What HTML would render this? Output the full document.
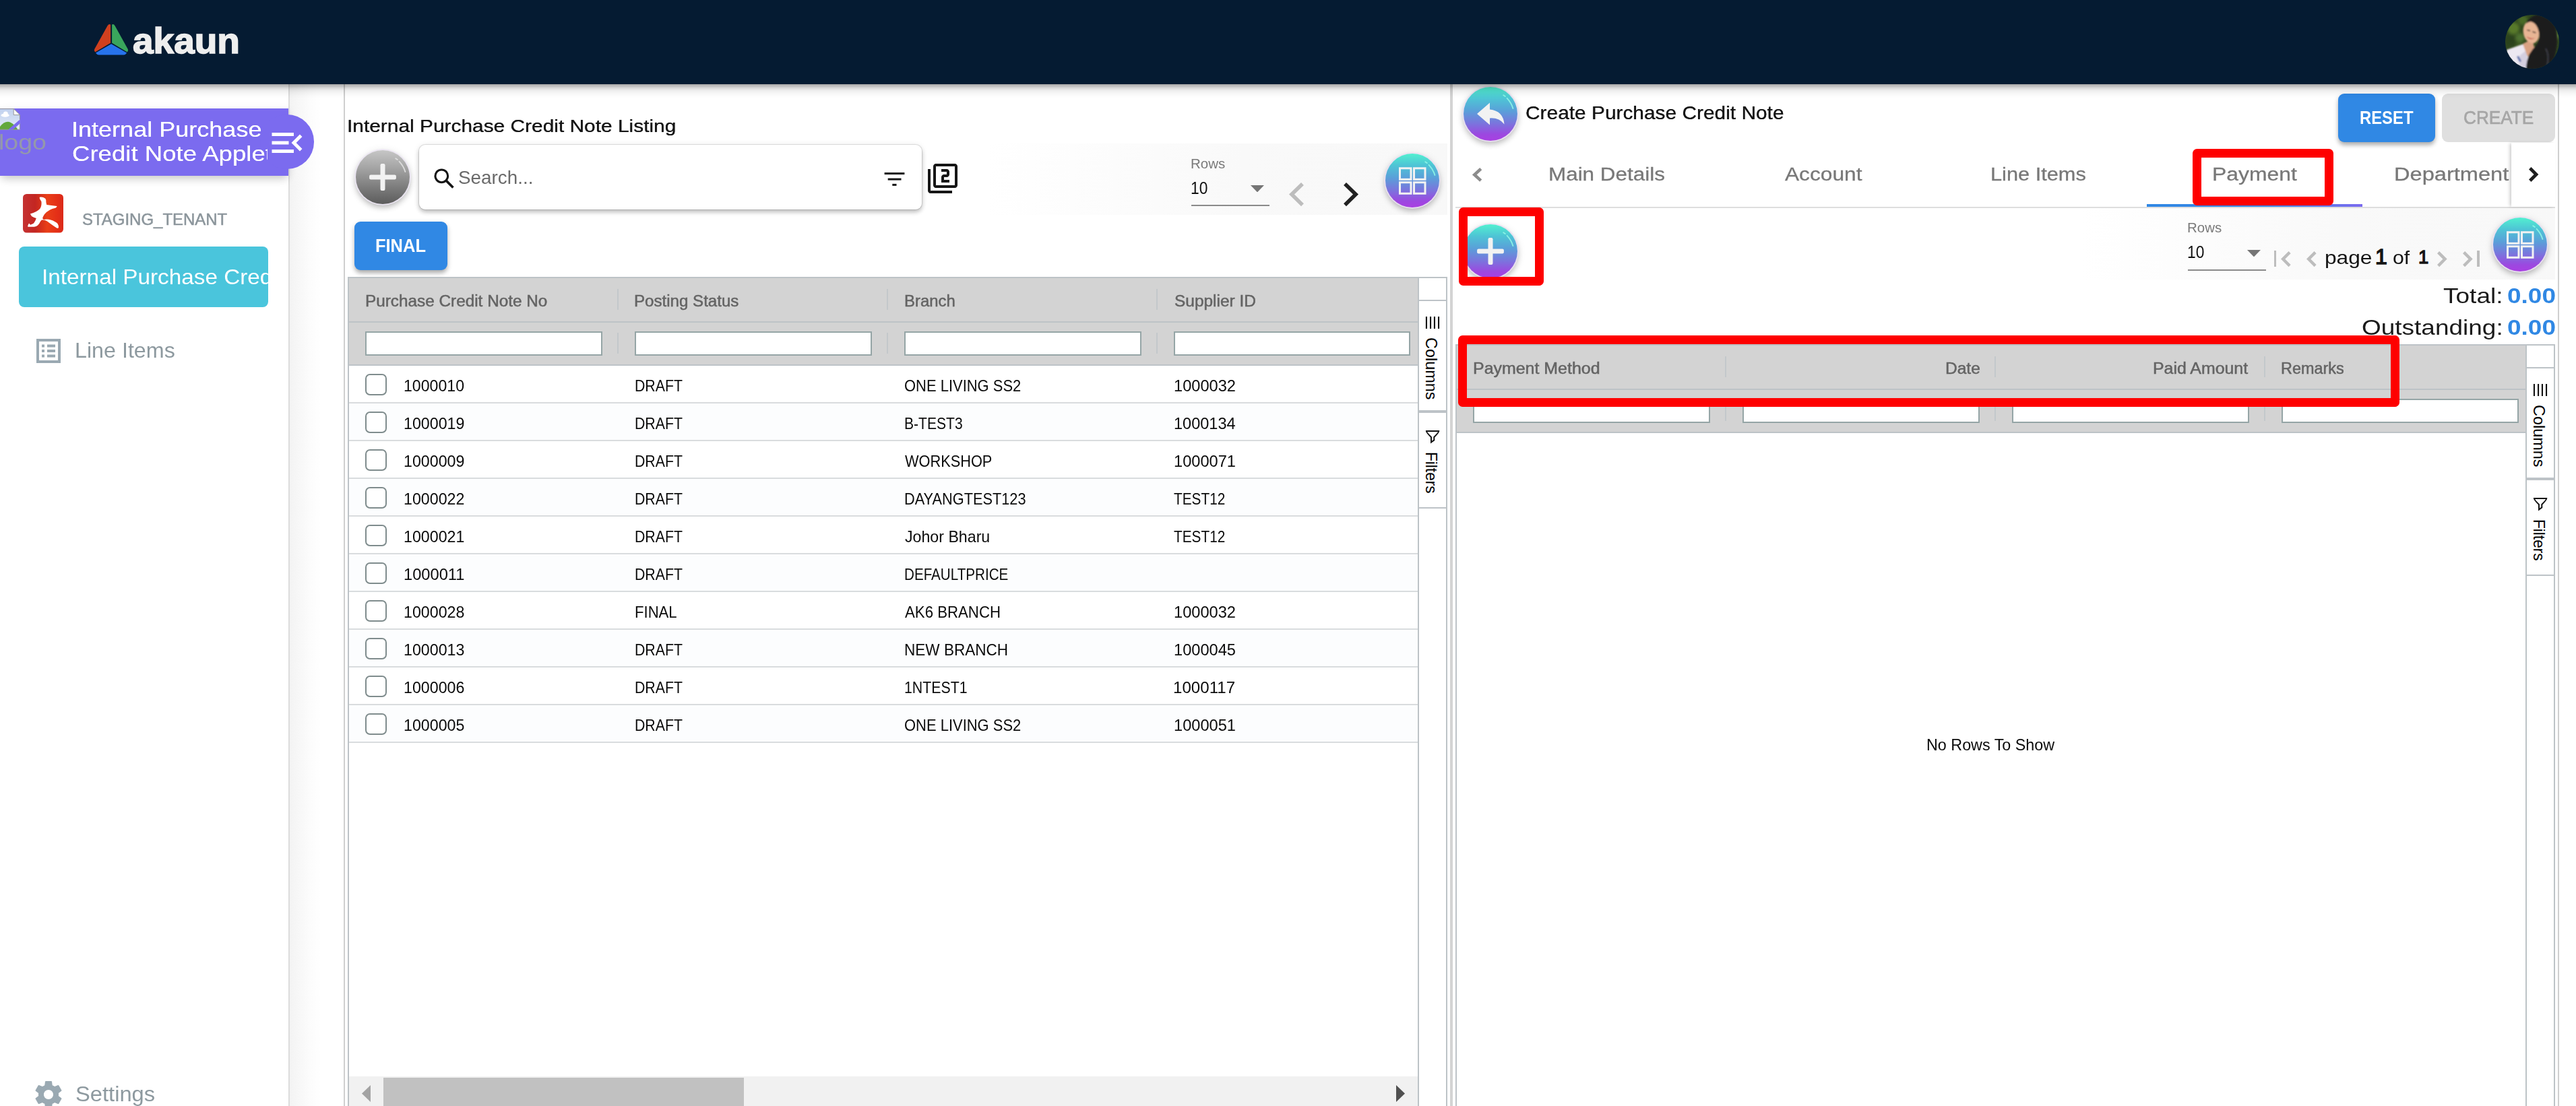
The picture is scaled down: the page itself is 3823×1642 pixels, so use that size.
<!DOCTYPE html>
<html lang="en"><head><meta charset="utf-8"><title>Internal Purchase Credit Note Applet</title>
<style>
*{box-sizing:border-box;margin:0;padding:0}
html,body{width:3823px;height:1642px;overflow:hidden;background:#fff}
body{position:relative;font-family:"Liberation Sans",Arial,sans-serif;color:#000}
.a{position:absolute}
.t{position:absolute;white-space:nowrap;line-height:1;display:block}
#hdr{left:-60px;top:-40px;width:3943px;padding:0;height:165px;background:#051b32;box-shadow:0 3px 6px rgba(0,0,0,.26),0 8px 13px rgba(0,0,0,.12),0 2px 20px rgba(0,0,0,.09);z-index:20}
#side{left:0;top:125px;width:430px;height:1517px;background:#fff;border-right:2px solid #dcdcdc;z-index:3}
#strip{left:430px;top:125px;width:80px;height:1517px;background:linear-gradient(90deg,#f3f3f3 0,#f8f8f8 20%,#fcfcfc 38%,#fff 58%);z-index:1}
#vl1{left:510px;top:125px;width:2px;height:1517px;background:#cfcfcf;z-index:1}
#banner{left:0;top:161px;width:428px;height:100px;background:#7b6bef;box-shadow:0 7px 12px -3px rgba(0,0,0,.17),0 3px 14px rgba(0,0,0,.07);z-index:5}
#pill{left:386px;top:170px;width:80px;height:81px;border-radius:40.5px;background:#7b6bef;z-index:6}
#cyan{left:28px;top:366px;width:370px;height:90px;border-radius:8px;background:#4ac5dc;overflow:hidden;z-index:4}
.circ{border-radius:50%;width:80px;height:80px;background:linear-gradient(180deg,#52f0d0 0%,#4ec4d5 22%,#5a9fd9 45%,#7b74dd 68%,#9c48e0 88%,#a93fe2 100%);box-shadow:0 0 0 1.8px rgba(234,224,242,.95),0 5px 9px rgba(0,0,0,.22),0 2px 14px rgba(0,0,0,.12)}
.circ.gray{background:linear-gradient(180deg,#c6c6c6 0%,#a2a2a2 35%,#7b7b7b 70%,#5c5c5c 100%);box-shadow:0 0 0 1.8px rgba(236,230,243,.95),0 5px 9px rgba(0,0,0,.22),0 2px 14px rgba(0,0,0,.12)}
.btn{border-radius:9px;background:#3088e4;box-shadow:0 5px 6px -1px rgba(0,0,0,.25),0 3px 9px rgba(0,0,0,.14)}
.band{background:linear-gradient(90deg,rgba(248,248,248,0) 0,#f9f9f9 55%,#f8f8f8 100%)}
.grid{border:2px solid #bdc3c7;background:#fff;overflow:hidden}
.gh{left:0;top:0;height:64px;background:#d3d3d3;border-bottom:2px solid #bdc3c7}
.gf{left:0;top:66px;height:64px;background:#d3d3d3;border-bottom:2px solid #bdc3c7}
.sep{width:2px;background:#c3c8cb}
.fi{height:36px;background:#fff;border:2px solid #95a5a6}
.row{left:0;height:56px;border-bottom:2px solid #d9dcde;background:#fff}
.row.odd{background:#fcfdfe}
.cb{width:32px;height:32px;border:2px solid #7f8c8d;border-radius:7px;background:#fff}
.sb{background:#fff;border-left:2px solid #bdc3c7}
.sbl{left:0;width:44px;height:2px;background:#bdc3c7}
.vt{position:absolute;white-space:nowrap;line-height:1;transform-origin:0 0;transform:rotate(90deg);font-size:24px;color:#000}
.red{border:13px solid #fe0000;border-radius:6.5px;z-index:15}
</style></head>
<body>
<div id="hdr" class="a"><div class="a" style="left:60px;top:40px;width:3823px;height:125px">
<svg class="a" style="left:136px;top:32px" width="60" height="54" viewBox="136 32 60 54">
<path d="M164.1 36.6 Q161.6 35 159.4 38.4 L140.5 72.6 Q139 75.8 141.4 77.2 L164.1 63.8 Z" fill="#d0401f"/>
<path d="M166.1 36.6 Q168.6 35 170.7 38.4 L189.5 72.6 Q191 75.8 188.6 77.2 L166.1 63.8 Z" fill="#3aa55c"/>
<path d="M165.1 65.3 L142 78.6 Q143.6 81.3 146.5 81.4 L183.7 81.4 Q186.6 81.3 188.2 78.6 Z" fill="#2773ec"/>
</svg>
<span class="t" style="left:197.14px;top:32.59px;font-size:54px;font-weight:700;color:#eeeeee;transform:scaleX(1.0183);transform-origin:0 0;-webkit-text-stroke:1.6px #eeeeee">akaun</span>
<svg class="a" style="left:3718px;top:22px" width="80" height="80" viewBox="0 0 80 80">
<defs><clipPath id="av"><circle cx="40" cy="40" r="40"/></clipPath><filter id="bl" x="-10%" y="-10%" width="120%" height="120%"><feGaussianBlur stdDeviation="0.9"/></filter><filter id="bl2" x="-20%" y="-20%" width="140%" height="140%"><feGaussianBlur stdDeviation="2.2"/></filter></defs>
<g clip-path="url(#av)">
<rect width="80" height="80" fill="#31481f"/>
<g filter="url(#bl2)"><circle cx="12" cy="20" r="9" fill="#587a2c"/><circle cx="26" cy="8" r="7" fill="#4a6a28"/><circle cx="8" cy="38" r="8" fill="#2a421c"/><circle cx="22" cy="34" r="7" fill="#4f7230"/><circle cx="76" cy="30" r="6" fill="#5d8238"/><circle cx="20" cy="46" r="5" fill="#3d5a22"/></g>
<g filter="url(#bl)">
<path d="M2 52 L26 43.5 L35 52 L33 82 L0 82 Z" fill="#ece8f2"/>
<path d="M22 60 L32 52 L33 82 L20 82 Z" fill="#d4cfe0"/>
<path d="M17 62 l3 -1 l4 8 l-3 1 Z" fill="#5c6fae"/>
<path d="M26 43 L40 36 L44 52 L33 62 Z" fill="#d9a283"/>
<ellipse cx="38.5" cy="26" rx="11.6" ry="16.5" transform="rotate(-12 38.5 26)" fill="#e8b594"/>
<path d="M31 13 Q38 -1 52 0 Q68 2 74.5 18 Q79 34 76 50 Q74 66 64 82 L31 82 Q31 68 36 58 Q41 50 47 44 Q52 36 50 26 Q47 12 38 10 Q34 10.5 31 13 Z" fill="#1a1b1f"/>
<path d="M60 50 Q66 60 62 76" stroke="#3a3b42" stroke-width="2.2" fill="none"/>
<path d="M31.5 32 Q37 39.5 44.5 34 Q38 36.6 31.5 32 Z" fill="#c44a45"/>
<path d="M32.5 22.5 l4.5 1.2 M40.5 25 l4.8 1.8" stroke="#3a2a26" stroke-width="1.6" fill="none"/>
</g>
</g></svg>
</div></div>
<div id="side" class="a"></div><div id="strip" class="a"></div><div id="vl1" class="a"></div>
<div id="pill" class="a"></div>
<div id="banner" class="a">
<svg class="a" style="left:0;top:0" width="30" height="32" viewBox="0 0 30 32">
<defs><linearGradient id="sky" x1="0" x2="0" y1="0" y2="1"><stop offset="0" stop-color="#bfd0ee"/><stop offset="1" stop-color="#e4ecf8"/></linearGradient></defs>
<path d="M0 0.4 H20.2 L29.6 9.6 V31.4 H0 Z" fill="url(#sky)"/>
<ellipse cx="7.6" cy="10.2" rx="6" ry="2.6" fill="#fff"/><circle cx="8.4" cy="8" r="3.4" fill="#fff"/>
<path d="M0 31.4 V27 Q8 17 16 21 Q22 24 26.5 31.4 Z" fill="#62a83c"/>
<path d="M12 31.6 L29.8 16.3 V22.2 L19.2 31.6 Z" fill="#7b6bef"/>
<path d="M20.2 0.4 V9.6 H29.6 Z" fill="#fff"/>
<path d="M0 0.6 H20.2 L29.4 9.6 V16.5 M20.2 0.6 V9.6 H29.4 M29.4 22.5 V31.2 H19.5 M12 31.2 H0" fill="none" stroke="#8e8e8e" stroke-width="0.9"/></svg>
</div>
<div class="a" style="left:0;top:161px;width:396.6px;height:100px;overflow:hidden;z-index:7">
<span class="t" style="left:-2.15px;top:34.56px;font-size:31px;font-weight:400;color:#9498ab;transform:scaleX(1.2109);transform-origin:0 0;">logo</span>
<span class="t" style="left:105.58px;top:16.28px;font-size:31.8px;font-weight:400;color:#fff;transform:scaleX(1.1333);transform-origin:0 0;text-shadow:0 0 .6px #fff">Internal Purchase</span>
<span class="t" style="left:106.68px;top:52.08px;font-size:31.8px;font-weight:400;color:#fff;transform:scaleX(1.1506);transform-origin:0 0;text-shadow:0 0 .6px #fff">Credit Note Applet</span>
</div>
<svg class="a" style="left:396px;top:182px;z-index:8" width="60" height="60" viewBox="0 0 24 24"><path fill="#fff" d="M3 18h13v-2H3v2zm0-5h10v-2H3v2zm0-7v2h13V6H3zm18 9.59L17.42 12 21 8.41 19.59 7l-5 5 5 5L21 15.59z"/></svg>
<svg class="a" style="left:34px;top:288px;z-index:4" width="60" height="57.6" viewBox="0 0 60 57.6">
<defs><linearGradient id="tg" x1="0" x2="1" y1="0" y2="0"><stop offset="0" stop-color="#c53232"/><stop offset=".3" stop-color="#c32622"/><stop offset=".5" stop-color="#dc3519"/><stop offset=".6" stop-color="#e93f18"/><stop offset=".85" stop-color="#e42f17"/><stop offset="1" stop-color="#da2a1a"/></linearGradient></defs>
<rect x="0" y="0" width="60" height="57.6" rx="5.5" fill="url(#tg)"/>
<path d="M24.8 4.8 Q29 3.6 33.3 6.8 Q35 9 34.4 12.3 L35.2 16 Q42 17 50.6 18.1 Q50.5 19.8 48.3 20.8 Q43 22 39.8 23.8 Q35 26.5 32.1 30 Q30 33 29.1 36.1 L30.6 38 Q36 36.8 41.4 38.4 Q48 40.5 51.3 43.8 Q53.5 47 52.9 50 Q52 51.2 50.6 50.7 Q46 48 41.4 44.6 Q38 41.8 35.2 40 Q31.5 38.3 28 38.6 Q27 39.6 26 40.7 Q24.5 44 22.1 46.5 Q20 48.4 16.8 48.8 L7.5 48.8 Q6.5 47 9.1 43.4 L11 45.7 Q13.8 45 16 43.4 Q18.6 40.4 19.8 36.1 Q16 35 12.9 33.1 L10.8 29.4 Q15.5 28.2 19.8 26.1 Q23 24.2 25.2 21.9 Q26.6 20 27.1 17.7 Q27.8 14.5 27.5 11.5 Q26.5 9.4 25.2 7.7 Q24.5 6 24.8 4.8 Z" fill="#fff"/></svg>
<div class="a" style="left:0;top:125px;width:428px;height:1517px;z-index:4">
<span class="t" style="left:121.95px;top:188.86px;font-size:24.5px;font-weight:400;color:#8b959b;transform:scaleX(0.9781);transform-origin:0 0;-webkit-text-stroke:.5px #8b959b">STAGING_TENANT</span>
</div>
<div id="cyan" class="a">
<span class="t" style="left:33.80px;top:28.61px;font-size:32px;font-weight:400;color:#fff;transform:scaleX(1.0404);transform-origin:0 0;">Internal Purchase Credit Note</span>
</div>
<svg class="a" style="left:54px;top:503px;z-index:4" width="36" height="36" viewBox="0 0 36 36"><rect x="2" y="2" width="32" height="32" fill="none" stroke="#9aa9b2" stroke-width="4"/><g fill="#9aa9b2"><rect x="8" y="8.5" width="4" height="4"/><rect x="8" y="16" width="4" height="4"/><rect x="8" y="23.5" width="4" height="4"/><rect x="16" y="8.5" width="12" height="4"/><rect x="16" y="16" width="12" height="4"/><rect x="16" y="23.5" width="12" height="4"/></g></svg>
<div class="a" style="left:0;top:0;width:428px;height:1642px;z-index:4">
<span class="t" style="left:110.88px;top:504.85px;font-size:31.6px;font-weight:400;color:#8d999f;transform:scaleX(1.0209);transform-origin:0 0;">Line Items</span>
<span class="t" style="left:112.38px;top:1609.53px;font-size:30.8px;font-weight:400;color:#8d999f;transform:scaleX(1.0616);transform-origin:0 0;">Settings</span>
</div>
<svg class="a" style="left:48px;top:1600.5px;z-index:4" width="48" height="48" viewBox="0 0 24 24"><path fill="#9aa9b2" d="M19.43 12.98c.04-.32.07-.64.07-.98s-.03-.66-.07-.98l2.11-1.65c.19-.15.24-.42.12-.64l-2-3.46c-.12-.22-.39-.3-.61-.22l-2.49 1c-.52-.4-1.08-.73-1.69-.98l-.38-2.65C14.46 2.18 14.25 2 14 2h-4c-.25 0-.46.18-.49.42l-.38 2.65c-.61.25-1.17.59-1.69.98l-2.49-1c-.23-.09-.49 0-.61.22l-2 3.46c-.13.22-.07.49.12.64l2.11 1.65c-.04.32-.07.65-.07.98s.03.66.07.98l-2.11 1.65c-.19.15-.24.42-.12.64l2 3.46c.12.22.39.3.61.22l2.49-1c.52.4 1.08.73 1.69.98l.38 2.65c.03.24.24.42.49.42h4c.25 0 .46-.18.49-.42l.38-2.65c.61-.25 1.17-.59 1.69-.98l2.49 1c.23.09.49 0 .61-.22l2-3.46c.12-.22.07-.49-.12-.64l-2.11-1.65zM12 15.5c-1.93 0-3.5-1.57-3.5-3.5s1.57-3.5 3.5-3.5 3.5 1.57 3.5 3.5-1.57 3.5-3.5 3.5z"/></svg><div class="a" style="left:512px;top:125px;width:1640px;height:1517px;background:#fff;z-index:2"></div>
<div class="a" style="left:0;top:0;z-index:5">
<span class="t" style="left:515.07px;top:174.48px;font-size:26.6px;font-weight:400;color:#141414;transform:scaleX(1.1236);transform-origin:0 0;text-shadow:0 0 .7px #141414">Internal Purchase Credit Note Listing</span>
</div>
<div class="a circ gray" style="left:528px;top:223px;z-index:6"><svg class="a" style="left:0;top:0" width="80" height="80" viewBox="0 0 80 80"><path d="M64.6 16.8 Q71 23.6 73.4 32" fill="none" stroke="#e0e0e0" stroke-width="1.9" stroke-linecap="round" opacity=".9"/><path d="M59.2 12.2 L61.8 14.1" fill="none" stroke="#e0e0e0" stroke-width="1.9" stroke-linecap="round" opacity=".9"/></svg><svg class="a" style="left:0;top:0" width="80" height="80" viewBox="0 0 80 80"><rect x="20.1" y="36.5" width="39.8" height="7" rx="2.2" fill="#f2f2f2"/><rect x="36.5" y="20.1" width="7" height="39.8" rx="2.2" fill="#f2f2f2"/></svg></div>
<div class="a" style="left:621.5px;top:215px;width:746px;height:95.6px;border-radius:9px;background:#fff;box-shadow:0 0 0 1px rgba(0,0,0,.10),0 4px 6px rgba(0,0,0,.22),0 1px 10px rgba(0,0,0,.10);z-index:5">
<svg class="a" style="left:22.6px;top:35.2px" width="31.2" height="31.2" viewBox="0 0 32 32"><circle cx="11.6" cy="11.6" r="9.6" fill="none" stroke="#151515" stroke-width="3.1"/><path d="M18.6 18.6 L29.2 29.2" stroke="#151515" stroke-width="3.7" stroke-linecap="butt"/></svg>
<span class="t" style="left:58.63px;top:34.87px;font-size:27.8px;font-weight:400;color:#6a6a6a;transform:scaleX(1.0012);transform-origin:0 0;">Search...</span>
<svg class="a" style="left:690px;top:40px" width="32" height="24" viewBox="0 0 32 24"><g fill="#151515"><rect x="0.6" y="1.1" width="29.8" height="3"/><rect x="5.7" y="9.6" width="19.8" height="3"/><rect x="12.3" y="17.9" width="6.2" height="3"/></g></svg>
</div>
<svg class="a" style="left:1374.9px;top:240.8px;z-index:5" width="48" height="48" viewBox="0 0 24 24"><path fill="#161616" d="M3 5H1v16c0 1.1.9 2 2 2h16v-2H3V5zm18-4H7c-1.1 0-2 .9-2 2v14c0 1.1.9 2 2 2h14c1.1 0 2-.9 2-2V3c0-1.1-.9-2-2-2zm0 16H7V3h14v14zm-4-4h-4v-2h2c1.1 0 2-.89 2-2V7c0-1.11-.9-2-2-2h-4v2h4v2h-2c-1.1 0-2 .89-2 2v4h6v-2z"/></svg>
<div class="a band" style="left:1468px;top:213px;width:680px;height:106px;z-index:3"></div>
<div class="a" style="left:0;top:0;z-index:5">
<span class="t" style="left:1767.00px;top:232.65px;font-size:20.5px;font-weight:400;color:#7a7a7a;transform:scaleX(1.0017);transform-origin:0 0;">Rows</span>
<span class="t" style="left:1767.10px;top:266.07px;font-size:26.5px;font-weight:400;color:#111;transform:scaleX(0.8600);transform-origin:0 0;">10</span>
<svg class="a" style="left:1856px;top:274.8px" width="20" height="10.4" viewBox="0 0 20 10.4"><path d="M0 0 H20 L10 10.4 Z" fill="#757575"/></svg>
<div class="a" style="left:1768px;top:303.6px;width:116px;height:2.4px;background:#8a8a8a"></div>
<svg class="a" style="left:1912.5px;top:270.5px;overflow:visible" width="22.0" height="35.19999999999999" viewBox="0 0 22.0 35.19999999999999"><path d="M19.98 2.02 L3.98 17.60 L19.98 33.18" fill="none" stroke="#bdbdbd" stroke-width="5.6" stroke-linejoin="miter" stroke-linecap="butt"/></svg>
<svg class="a" style="left:1993.8px;top:270.5px;overflow:visible" width="22.0" height="35.19999999999999" viewBox="0 0 22.0 35.19999999999999"><path d="M2.02 2.02 L18.02 17.60 L2.02 33.18" fill="none" stroke="#212121" stroke-width="5.6" stroke-linejoin="miter" stroke-linecap="butt"/></svg>
</div>
<div class="a circ " style="left:2056px;top:227.5px;z-index:6"><svg class="a" style="left:0;top:0" width="80" height="80" viewBox="0 0 80 80"><path d="M64.6 16.8 Q71 23.6 73.4 32" fill="none" stroke="#8ff5e6" stroke-width="1.9" stroke-linecap="round" opacity=".9"/><path d="M59.2 12.2 L61.8 14.1" fill="none" stroke="#8ff5e6" stroke-width="1.9" stroke-linecap="round" opacity=".9"/></svg><svg class="a" style="left:0;top:0" width="80" height="80" viewBox="0 0 80 80"><g fill="none" stroke="#f2f2f2" stroke-width="3"><rect x="21.5" y="21.8" width="16.5" height="16.5"/><rect x="42.5" y="21.8" width="16.5" height="16.5"/><rect x="21.5" y="42.8" width="16.5" height="16.5"/><rect x="42.5" y="42.8" width="16.5" height="16.5"/></g></svg></div>
<div class="a btn" style="left:526px;top:329px;width:138px;height:72px;z-index:5">
<span class="t" style="left:31.11px;top:20.87px;font-size:28.5px;font-weight:700;color:#fff;transform:scaleX(0.8930);transform-origin:0 0;">FINAL</span>
</div>
<div class="a grid" style="left:516px;top:411px;width:1632px;height:1300px;z-index:3">
<div class="a gh" style="width:1586px;height:66px"></div>
<div class="a gf" style="width:1586px;height:64px"></div>
<span class="t" style="left:24.10px;top:23.08px;font-size:23.3px;font-weight:400;color:#646464;transform:scaleX(1.0439);transform-origin:0 0;-webkit-text-stroke:.5px #646464">Purchase Credit Note No</span>
<span class="t" style="left:423.32px;top:23.08px;font-size:23.3px;font-weight:400;color:#646464;transform:scaleX(1.0346);transform-origin:0 0;-webkit-text-stroke:.5px #646464">Posting Status</span>
<span class="t" style="left:824.13px;top:23.08px;font-size:23.3px;font-weight:400;color:#646464;transform:scaleX(1.0255);transform-origin:0 0;-webkit-text-stroke:.5px #646464">Branch</span>
<span class="t" style="left:1224.94px;top:23.08px;font-size:23.3px;font-weight:400;color:#646464;transform:scaleX(1.0490);transform-origin:0 0;-webkit-text-stroke:.5px #646464">Supplier ID</span>
<div class="a sep" style="left:398px;top:16.399999999999977px;height:31px"></div>
<div class="a sep" style="left:398px;top:81px;height:31px"></div>
<div class="a sep" style="left:798px;top:16.399999999999977px;height:31px"></div>
<div class="a sep" style="left:798px;top:81px;height:31px"></div>
<div class="a sep" style="left:1198px;top:16.399999999999977px;height:31px"></div>
<div class="a sep" style="left:1198px;top:81px;height:31px"></div>
<div class="a fi" style="left:24.299999999999955px;top:79.39999999999998px;width:352px;height:35.4px"></div>
<div class="a fi" style="left:424.29999999999995px;top:79.39999999999998px;width:352px;height:35.4px"></div>
<div class="a fi" style="left:824.3px;top:79.39999999999998px;width:352px;height:35.4px"></div>
<div class="a fi" style="left:1224.3px;top:79.39999999999998px;width:351px;height:35.4px"></div>
<div class="a row" style="top:130px;width:1586px">
<div class="a cb" style="left:24.299999999999955px;top:12px"></div>
<span class="t" style="left:80.55px;top:19.02px;font-size:23.6px;font-weight:400;color:#0a0a0a;transform:scaleX(0.9798);transform-origin:0 0;">1000010</span>
<span class="t" style="left:423.94px;top:19.02px;font-size:23.6px;font-weight:400;color:#0a0a0a;transform:scaleX(0.9017);transform-origin:0 0;">DRAFT</span>
<span class="t" style="left:824.37px;top:19.02px;font-size:23.6px;font-weight:400;color:#0a0a0a;transform:scaleX(0.9306);transform-origin:0 0;">ONE LIVING SS2</span>
<span class="t" style="left:1223.52px;top:19.02px;font-size:23.6px;font-weight:400;color:#0a0a0a;transform:scaleX(1.0017);transform-origin:0 0;">1000032</span>
</div>
<div class="a row odd" style="top:186px;width:1586px">
<div class="a cb" style="left:24.299999999999955px;top:12px"></div>
<span class="t" style="left:80.55px;top:19.02px;font-size:23.6px;font-weight:400;color:#0a0a0a;transform:scaleX(0.9838);transform-origin:0 0;">1000019</span>
<span class="t" style="left:423.94px;top:19.02px;font-size:23.6px;font-weight:400;color:#0a0a0a;transform:scaleX(0.9017);transform-origin:0 0;">DRAFT</span>
<span class="t" style="left:823.75px;top:19.02px;font-size:23.6px;font-weight:400;color:#0a0a0a;transform:scaleX(0.8935);transform-origin:0 0;">B-TEST3</span>
<span class="t" style="left:1223.53px;top:19.02px;font-size:23.6px;font-weight:400;color:#0a0a0a;transform:scaleX(0.9976);transform-origin:0 0;">1000134</span>
</div>
<div class="a row" style="top:242px;width:1586px">
<div class="a cb" style="left:24.299999999999955px;top:12px"></div>
<span class="t" style="left:80.55px;top:19.02px;font-size:23.6px;font-weight:400;color:#0a0a0a;transform:scaleX(0.9838);transform-origin:0 0;">1000009</span>
<span class="t" style="left:423.94px;top:19.02px;font-size:23.6px;font-weight:400;color:#0a0a0a;transform:scaleX(0.9017);transform-origin:0 0;">DRAFT</span>
<span class="t" style="left:825.40px;top:19.02px;font-size:23.6px;font-weight:400;color:#0a0a0a;transform:scaleX(0.9224);transform-origin:0 0;">WORKSHOP</span>
<span class="t" style="left:1223.52px;top:19.02px;font-size:23.6px;font-weight:400;color:#0a0a0a;transform:scaleX(1.0017);transform-origin:0 0;">1000071</span>
</div>
<div class="a row odd" style="top:298px;width:1586px">
<div class="a cb" style="left:24.299999999999955px;top:12px"></div>
<span class="t" style="left:80.55px;top:19.02px;font-size:23.6px;font-weight:400;color:#0a0a0a;transform:scaleX(0.9838);transform-origin:0 0;">1000022</span>
<span class="t" style="left:423.94px;top:19.02px;font-size:23.6px;font-weight:400;color:#0a0a0a;transform:scaleX(0.9017);transform-origin:0 0;">DRAFT</span>
<span class="t" style="left:823.70px;top:19.02px;font-size:23.6px;font-weight:400;color:#0a0a0a;transform:scaleX(0.9220);transform-origin:0 0;">DAYANGTEST123</span>
<span class="t" style="left:1224.07px;top:19.02px;font-size:23.6px;font-weight:400;color:#0a0a0a;transform:scaleX(0.8822);transform-origin:0 0;">TEST12</span>
</div>
<div class="a row" style="top:354px;width:1586px">
<div class="a cb" style="left:24.299999999999955px;top:12px"></div>
<span class="t" style="left:80.55px;top:19.02px;font-size:23.6px;font-weight:400;color:#0a0a0a;transform:scaleX(0.9838);transform-origin:0 0;">1000021</span>
<span class="t" style="left:423.94px;top:19.02px;font-size:23.6px;font-weight:400;color:#0a0a0a;transform:scaleX(0.9017);transform-origin:0 0;">DRAFT</span>
<span class="t" style="left:825.04px;top:19.02px;font-size:23.6px;font-weight:400;color:#0a0a0a;transform:scaleX(0.9821);transform-origin:0 0;">Johor Bharu</span>
<span class="t" style="left:1224.07px;top:19.02px;font-size:23.6px;font-weight:400;color:#0a0a0a;transform:scaleX(0.8822);transform-origin:0 0;">TEST12</span>
</div>
<div class="a row odd" style="top:410px;width:1586px">
<div class="a cb" style="left:24.299999999999955px;top:12px"></div>
<span class="t" style="left:80.52px;top:19.02px;font-size:23.6px;font-weight:400;color:#0a0a0a;transform:scaleX(1.0035);transform-origin:0 0;">1000011</span>
<span class="t" style="left:423.94px;top:19.02px;font-size:23.6px;font-weight:400;color:#0a0a0a;transform:scaleX(0.9017);transform-origin:0 0;">DRAFT</span>
<span class="t" style="left:823.79px;top:19.02px;font-size:23.6px;font-weight:400;color:#0a0a0a;transform:scaleX(0.8742);transform-origin:0 0;">DEFAULTPRICE</span>
</div>
<div class="a row" style="top:466px;width:1586px">
<div class="a cb" style="left:24.299999999999955px;top:12px"></div>
<span class="t" style="left:80.55px;top:19.02px;font-size:23.6px;font-weight:400;color:#0a0a0a;transform:scaleX(0.9838);transform-origin:0 0;">1000028</span>
<span class="t" style="left:423.87px;top:19.02px;font-size:23.6px;font-weight:400;color:#0a0a0a;transform:scaleX(0.9372);transform-origin:0 0;">FINAL</span>
<span class="t" style="left:825.40px;top:19.02px;font-size:23.6px;font-weight:400;color:#0a0a0a;transform:scaleX(0.9416);transform-origin:0 0;">AK6 BRANCH</span>
<span class="t" style="left:1223.52px;top:19.02px;font-size:23.6px;font-weight:400;color:#0a0a0a;transform:scaleX(1.0017);transform-origin:0 0;">1000032</span>
</div>
<div class="a row odd" style="top:522px;width:1586px">
<div class="a cb" style="left:24.299999999999955px;top:12px"></div>
<span class="t" style="left:80.55px;top:19.02px;font-size:23.6px;font-weight:400;color:#0a0a0a;transform:scaleX(0.9838);transform-origin:0 0;">1000013</span>
<span class="t" style="left:423.94px;top:19.02px;font-size:23.6px;font-weight:400;color:#0a0a0a;transform:scaleX(0.9017);transform-origin:0 0;">DRAFT</span>
<span class="t" style="left:823.64px;top:19.02px;font-size:23.6px;font-weight:400;color:#0a0a0a;transform:scaleX(0.9562);transform-origin:0 0;">NEW BRANCH</span>
<span class="t" style="left:1223.52px;top:19.02px;font-size:23.6px;font-weight:400;color:#0a0a0a;transform:scaleX(1.0017);transform-origin:0 0;">1000045</span>
</div>
<div class="a row" style="top:578px;width:1586px">
<div class="a cb" style="left:24.299999999999955px;top:12px"></div>
<span class="t" style="left:80.55px;top:19.02px;font-size:23.6px;font-weight:400;color:#0a0a0a;transform:scaleX(0.9838);transform-origin:0 0;">1000006</span>
<span class="t" style="left:423.94px;top:19.02px;font-size:23.6px;font-weight:400;color:#0a0a0a;transform:scaleX(0.9017);transform-origin:0 0;">DRAFT</span>
<span class="t" style="left:824.07px;top:19.02px;font-size:23.6px;font-weight:400;color:#0a0a0a;transform:scaleX(0.9034);transform-origin:0 0;">1NTEST1</span>
<span class="t" style="left:1223.49px;top:19.02px;font-size:23.6px;font-weight:400;color:#0a0a0a;transform:scaleX(1.0217);transform-origin:0 0;">1000117</span>
</div>
<div class="a row odd" style="top:634px;width:1586px">
<div class="a cb" style="left:24.299999999999955px;top:12px"></div>
<span class="t" style="left:80.55px;top:19.02px;font-size:23.6px;font-weight:400;color:#0a0a0a;transform:scaleX(0.9838);transform-origin:0 0;">1000005</span>
<span class="t" style="left:423.94px;top:19.02px;font-size:23.6px;font-weight:400;color:#0a0a0a;transform:scaleX(0.9017);transform-origin:0 0;">DRAFT</span>
<span class="t" style="left:824.37px;top:19.02px;font-size:23.6px;font-weight:400;color:#0a0a0a;transform:scaleX(0.9306);transform-origin:0 0;">ONE LIVING SS2</span>
<span class="t" style="left:1223.52px;top:19.02px;font-size:23.6px;font-weight:400;color:#0a0a0a;transform:scaleX(1.0017);transform-origin:0 0;">1000051</span>
</div>
<div class="a" style="left:0;top:1185px;width:1586px;height:60px;background:#f1f1f1">
<div class="a" style="left:51px;top:2px;width:535px;height:58px;background:#c1c1c1"></div>
<svg class="a" style="left:19px;top:13px" width="13" height="25" viewBox="0 0 13 25"><path d="M13 0 V25 L0 12.5 Z" fill="#a3a3a3"/></svg>
<svg class="a" style="left:1554px;top:13px" width="13" height="25" viewBox="0 0 13 25"><path d="M0 0 V25 L13 12.5 Z" fill="#505050"/></svg>
</div>
</div>
<div class="a sb" style="left:2104px;top:413px;width:42px;height:1300px;z-index:4">
<div class="a sbl" style="top:32px;height:2px;width:40px"></div>
<div class="a sbl" style="top:196px;height:4px;width:40px"></div>
<div class="a sbl" style="top:340px;height:2px;width:40px"></div>
<svg class="a" style="left:0;top:50px" width="40" height="30" viewBox="0 50 40 30"><g fill="#111"><rect x="9.9" y="57" width="2.1" height="18"/><rect x="16" y="57" width="2.1" height="18"/><rect x="21.9" y="57" width="2.1" height="18"/><rect x="28" y="57" width="2.1" height="18"/></g></svg>
<span class="vt" style="left:30.4px;top:88.10px;font-size:24px;transform:rotate(90deg) scaleX(0.9760)">Columns</span>
<svg class="a" style="left:0;top:220px" width="40" height="30" viewBox="0 220 40 30"><path d="M10.9 226.9 H29.3 Q29.4 229 22.3 236 V240.4 L18 243.6 V236 Q10.8 229 10.9 226.9 Z" fill="none" stroke="#111" stroke-width="2" stroke-linejoin="miter"/></svg>
<span class="vt" style="left:30.4px;top:258.43px;font-size:24px;transform:rotate(90deg) scaleX(0.9425)">Filters</span>
</div>
<div class="a" style="left:2152px;top:125px;width:4px;height:1517px;background:#d3d3d3;z-index:2"></div><div class="a" style="left:2156px;top:125px;width:1640px;height:1517px;background:#fff;z-index:2"></div>
<div class="a" style="left:3796px;top:125px;width:2px;height:1517px;background:#cfcfcf;z-index:2"></div>
<div class="a circ " style="left:2172px;top:128.9px;z-index:6"><svg class="a" style="left:0;top:0" width="80" height="80" viewBox="0 0 80 80"><path d="M64.6 16.8 Q71 23.6 73.4 32" fill="none" stroke="#8ff5e6" stroke-width="1.9" stroke-linecap="round" opacity=".9"/><path d="M59.2 12.2 L61.8 14.1" fill="none" stroke="#8ff5e6" stroke-width="1.9" stroke-linecap="round" opacity=".9"/></svg><svg class="a" style="left:0;top:0" width="80" height="80" viewBox="0 0 80 80"><path d="M39 23.5 L20 40 L39 56.5 V46.4 Q53 45.5 60.5 55.5 Q59 35.5 39 33.4 Z" fill="#f2f2f2"/></svg></div>
<div class="a" style="left:0;top:0;z-index:5">
<span class="t" style="left:2263.60px;top:154.10px;font-size:28px;font-weight:400;color:#141414;transform:scaleX(1.0668);transform-origin:0 0;text-shadow:0 0 .7px #141414">Create Purchase Credit Note</span>
</div>
<div class="a btn" style="left:3470px;top:139px;width:144px;height:72px;z-index:5">
<span class="t" style="left:31.51px;top:22.11px;font-size:27.4px;font-weight:700;color:#fff;transform:scaleX(0.8705);transform-origin:0 0;">RESET</span>
</div>
<div class="a" style="left:3624px;top:139px;width:168px;height:72px;border-radius:9px;background:#dfdfdf;z-index:5">
<span class="t" style="left:31.77px;top:22.11px;font-size:27.4px;font-weight:400;color:#a6a6a6;transform:scaleX(0.9562);transform-origin:0 0;-webkit-text-stroke:.7px #a6a6a6">CREATE</span>
</div>
<div class="a" style="left:2160px;top:215px;width:1568px;height:93px;overflow:hidden;z-index:4">
<span class="t" style="left:138.04px;top:28.83px;font-size:28.2px;font-weight:400;color:#787878;transform:scaleX(1.1146);transform-origin:0 0;-webkit-text-stroke:.3px #787878">Main Details</span>
<span class="t" style="left:488.70px;top:28.83px;font-size:28.2px;font-weight:400;color:#787878;transform:scaleX(1.1236);transform-origin:0 0;-webkit-text-stroke:.3px #787878">Account</span>
<span class="t" style="left:793.80px;top:28.83px;font-size:28.2px;font-weight:400;color:#787878;transform:scaleX(1.0905);transform-origin:0 0;-webkit-text-stroke:.3px #787878">Line Items</span>
<span class="t" style="left:1123.01px;top:28.83px;font-size:28.2px;font-weight:400;color:#787878;transform:scaleX(1.1312);transform-origin:0 0;-webkit-text-stroke:.3px #787878">Payment</span>
<span class="t" style="left:1393.15px;top:28.83px;font-size:28.2px;font-weight:400;color:#787878;transform:scaleX(1.1561);transform-origin:0 0;-webkit-text-stroke:.3px #787878">Department</span>
</div>
<div class="a" style="left:0;top:0;z-index:5">
<svg class="a" style="left:2185px;top:248.6px;overflow:visible" width="14.400000000000091" height="20.799999999999983" viewBox="0 0 14.400000000000091 20.799999999999983"><path d="M12.74 1.66 L3.27 10.40 L12.74 19.14" fill="none" stroke="#8c8c8c" stroke-width="4.6" stroke-linejoin="miter" stroke-linecap="butt"/></svg>
</div>
<div class="a" style="left:2160px;top:307px;width:1632px;height:2px;background:#dedede;z-index:4"></div>
<div class="a" style="left:3186px;top:303px;width:320px;height:4px;background:linear-gradient(90deg,#3088e4 0,#3b86e6 55%,#7b6bef 100%);z-index:5"></div>
<div class="a" style="left:3727px;top:212px;width:65px;height:95px;background:#fff;box-shadow:-3px 0 5px -1px rgba(0,0,0,.22);z-index:6">
<svg class="a" style="left:26px;top:36px;overflow:visible" width="14.400000000000091" height="22" viewBox="0 0 14.400000000000091 22"><path d="M1.73 1.73 L10.99 11.00 L1.73 20.27" fill="none" stroke="#1e1e1e" stroke-width="4.8" stroke-linejoin="miter" stroke-linecap="butt"/></svg>
</div>
<div class="a band" style="left:3090px;top:309px;width:702px;height:106px;z-index:3"></div>
<div class="a" style="left:0;top:0;z-index:5">
<span class="t" style="left:3246.10px;top:327.95px;font-size:20.5px;font-weight:400;color:#7a7a7a;transform:scaleX(0.9976);transform-origin:0 0;">Rows</span>
<span class="t" style="left:3245.75px;top:361.27px;font-size:26.5px;font-weight:400;color:#111;transform:scaleX(0.8600);transform-origin:0 0;">10</span>
<svg class="a" style="left:3335.4px;top:370.8px" width="20" height="10.4" viewBox="0 0 20 10.4"><path d="M0 0 H20 L10 10.4 Z" fill="#757575"/></svg>
<div class="a" style="left:3247px;top:399.6px;width:116px;height:2.4px;background:#8a8a8a"></div>
<div class="a" style="left:3374.5px;top:372px;width:3.6px;height:24px;background:#bdbdbd"></div>
<svg class="a" style="left:3384.5px;top:372.6px;overflow:visible" width="14.699999999999818" height="23.19999999999999" viewBox="0 0 14.699999999999818 23.19999999999999"><path d="M13.12 1.58 L3.12 11.60 L13.12 21.62" fill="none" stroke="#bdbdbd" stroke-width="4.4" stroke-linejoin="miter" stroke-linecap="butt"/></svg>
<svg class="a" style="left:3422.7px;top:372.6px;overflow:visible" width="14.700000000000273" height="23.19999999999999" viewBox="0 0 14.700000000000273 23.19999999999999"><path d="M13.12 1.58 L3.12 11.60 L13.12 21.62" fill="none" stroke="#bdbdbd" stroke-width="4.4" stroke-linejoin="miter" stroke-linecap="butt"/></svg>
<span class="t" style="left:3449.62px;top:367.57px;font-size:28.5px;font-weight:400;color:#141414;transform:scaleX(1.1114);transform-origin:0 0;">page</span>
<span class="t" style="left:3525.00px;top:364.61px;font-size:32px;font-weight:400;color:#141414;-webkit-text-stroke:1.5px #141414">1</span>
<span class="t" style="left:3551.05px;top:367.57px;font-size:28.5px;font-weight:400;color:#141414;transform:scaleX(1.0620);transform-origin:0 0;">of</span>
<span class="t" style="left:3589.08px;top:368.42px;font-size:27.5px;font-weight:400;color:#141414;-webkit-text-stroke:1.3px #141414">1</span>
<svg class="a" style="left:3617px;top:372.6px;overflow:visible" width="14.699999999999818" height="23.19999999999999" viewBox="0 0 14.699999999999818 23.19999999999999"><path d="M1.58 1.58 L11.58 11.60 L1.58 21.62" fill="none" stroke="#bdbdbd" stroke-width="4.4" stroke-linejoin="miter" stroke-linecap="butt"/></svg>
<svg class="a" style="left:3655px;top:372.6px;overflow:visible" width="14.699999999999818" height="23.19999999999999" viewBox="0 0 14.699999999999818 23.19999999999999"><path d="M1.58 1.58 L11.58 11.60 L1.58 21.62" fill="none" stroke="#bdbdbd" stroke-width="4.4" stroke-linejoin="miter" stroke-linecap="butt"/></svg>
<div class="a" style="left:3676.2px;top:372px;width:3.6px;height:24px;background:#bdbdbd"></div>
<span class="t" style="left:3626.42px;top:422.71px;font-size:32px;font-weight:400;color:#1a1a1a;transform:scaleX(1.1574);transform-origin:0 0;">Total:</span>
<span class="t" style="left:3720.54px;top:422.71px;font-size:32px;font-weight:700;color:#3088e4;transform:scaleX(1.1553);transform-origin:0 0;">0.00</span>
<span class="t" style="left:3505.27px;top:470.41px;font-size:32px;font-weight:400;color:#1a1a1a;transform:scaleX(1.1555);transform-origin:0 0;">Outstanding:</span>
<span class="t" style="left:3720.54px;top:470.41px;font-size:32px;font-weight:700;color:#3088e4;transform:scaleX(1.1553);transform-origin:0 0;">0.00</span>
</div>
<div class="a circ " style="left:3700px;top:322.8px;z-index:6"><svg class="a" style="left:0;top:0" width="80" height="80" viewBox="0 0 80 80"><path d="M64.6 16.8 Q71 23.6 73.4 32" fill="none" stroke="#8ff5e6" stroke-width="1.9" stroke-linecap="round" opacity=".9"/><path d="M59.2 12.2 L61.8 14.1" fill="none" stroke="#8ff5e6" stroke-width="1.9" stroke-linecap="round" opacity=".9"/></svg><svg class="a" style="left:0;top:0" width="80" height="80" viewBox="0 0 80 80"><g fill="none" stroke="#f2f2f2" stroke-width="3"><rect x="21.5" y="21.8" width="16.5" height="16.5"/><rect x="42.5" y="21.8" width="16.5" height="16.5"/><rect x="21.5" y="42.8" width="16.5" height="16.5"/><rect x="42.5" y="42.8" width="16.5" height="16.5"/></g></svg></div>
<div class="a circ " style="left:2172px;top:332.5px;z-index:6"><svg class="a" style="left:0;top:0" width="80" height="80" viewBox="0 0 80 80"><path d="M64.6 16.8 Q71 23.6 73.4 32" fill="none" stroke="#8ff5e6" stroke-width="1.9" stroke-linecap="round" opacity=".9"/><path d="M59.2 12.2 L61.8 14.1" fill="none" stroke="#8ff5e6" stroke-width="1.9" stroke-linecap="round" opacity=".9"/></svg><svg class="a" style="left:0;top:0" width="80" height="80" viewBox="0 0 80 80"><rect x="20.1" y="36.5" width="39.8" height="7" rx="2.2" fill="#f2f2f2"/><rect x="36.5" y="20.1" width="7" height="39.8" rx="2.2" fill="#f2f2f2"/></svg></div>
<div class="a grid" style="left:2160px;top:511px;width:1632px;height:1200px;z-index:3">
<div class="a gh" style="width:1586px;height:66px"></div>
<div class="a gf" style="width:1586px;height:64px"></div>
<span class="t" style="left:23.85px;top:23.18px;font-size:23.3px;font-weight:400;color:#646464;transform:scaleX(1.0705);transform-origin:0 0;-webkit-text-stroke:.5px #646464">Payment Method</span>
<span class="t" style="left:724.68px;top:23.18px;font-size:23.3px;font-weight:400;color:#646464;transform:scaleX(1.0527);transform-origin:0 0;-webkit-text-stroke:.5px #646464">Date</span>
<span class="t" style="left:1033.46px;top:23.18px;font-size:23.3px;font-weight:400;color:#646464;transform:scaleX(1.0679);transform-origin:0 0;-webkit-text-stroke:.5px #646464">Paid Amount</span>
<span class="t" style="left:1222.77px;top:23.18px;font-size:23.3px;font-weight:400;color:#646464;transform:scaleX(1.0059);transform-origin:0 0;-webkit-text-stroke:.5px #646464">Remarks</span>
<div class="a sep" style="left:398px;top:16.399999999999977px;height:31px"></div>
<div class="a sep" style="left:398px;top:81px;height:31px"></div>
<div class="a sep" style="left:798px;top:16.399999999999977px;height:31px"></div>
<div class="a sep" style="left:798px;top:81px;height:31px"></div>
<div class="a sep" style="left:1198px;top:16.399999999999977px;height:31px"></div>
<div class="a sep" style="left:1198px;top:81px;height:31px"></div>
<div class="a fi" style="left:24px;top:79.39999999999998px;width:352px;height:35.4px"></div>
<div class="a fi" style="left:424px;top:79.39999999999998px;width:352px;height:35.4px"></div>
<div class="a fi" style="left:824px;top:79.39999999999998px;width:352px;height:35.4px"></div>
<div class="a fi" style="left:1224px;top:79.39999999999998px;width:351.5px;height:35.4px"></div>
<span class="t" style="left:696.78px;top:581.62px;font-size:23.6px;font-weight:400;color:#0a0a0a;transform:scaleX(0.9887);transform-origin:0 0;">No Rows To Show</span>
</div>
<div class="a sb" style="left:3748px;top:513px;width:42px;height:1300px;z-index:4">
<div class="a sbl" style="top:32px;height:2px;width:40px"></div>
<div class="a sbl" style="top:196px;height:4px;width:40px"></div>
<div class="a sbl" style="top:340px;height:2px;width:40px"></div>
<svg class="a" style="left:0;top:50px" width="40" height="30" viewBox="0 50 40 30"><g fill="#111"><rect x="9.9" y="57" width="2.1" height="18"/><rect x="16" y="57" width="2.1" height="18"/><rect x="21.9" y="57" width="2.1" height="18"/><rect x="28" y="57" width="2.1" height="18"/></g></svg>
<span class="vt" style="left:30.4px;top:88.10px;font-size:24px;transform:rotate(90deg) scaleX(0.9760)">Columns</span>
<svg class="a" style="left:0;top:220px" width="40" height="30" viewBox="0 220 40 30"><path d="M10.9 226.9 H29.3 Q29.4 229 22.3 236 V240.4 L18 243.6 V236 Q10.8 229 10.9 226.9 Z" fill="none" stroke="#111" stroke-width="2" stroke-linejoin="miter"/></svg>
<span class="vt" style="left:30.4px;top:258.43px;font-size:24px;transform:rotate(90deg) scaleX(0.9425)">Filters</span>
</div>
<div class="a red" style="left:2165.4px;top:308px;width:125.3px;height:116.2px;border-top-width:13px"></div>
<div class="a red" style="left:3254px;top:221.3px;width:209.0px;height:83.7px;border-top-width:13px"></div>
<div class="a red" style="left:2164px;top:497.7px;width:1397.0px;height:106.3px;border-top-width:13.4px"></div>
</body></html>
